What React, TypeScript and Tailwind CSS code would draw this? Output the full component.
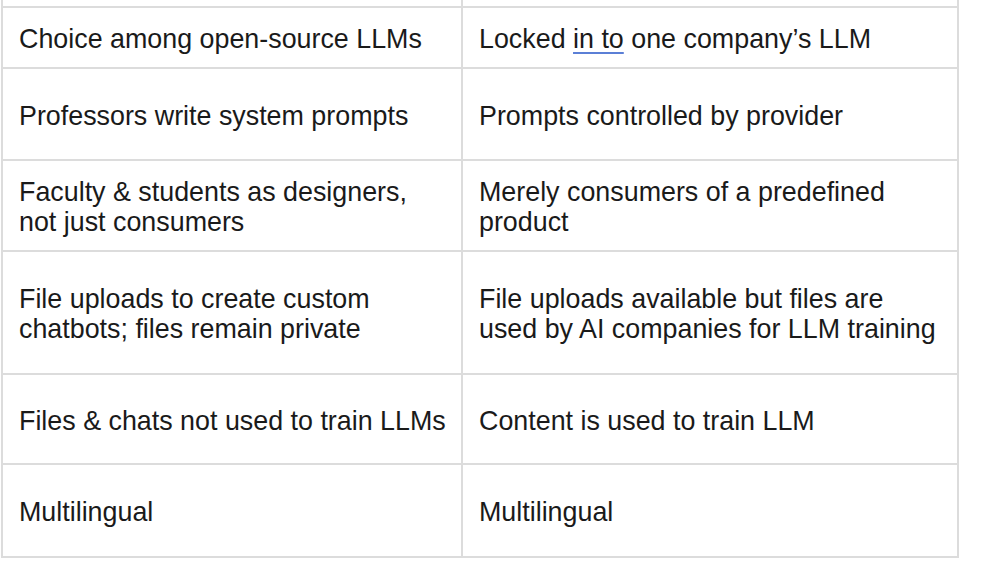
import React from "react";

type Row = { h: string; left: React.ReactNode; right: React.ReactNode };

const rows: Row[] = [
  {
    h: "h-[61px]",
    left: "Choice among open-source LLMs",
    right: (
      <>
        Locked{" "}
        <span className="underline decoration-[#5b7fd6] decoration-2 underline-offset-[4px]">in to</span>{" "}
        one company’s LLM
      </>
    ),
  },
  { h: "h-[92px]", left: "Professors write system prompts", right: "Prompts controlled by provider" },
  {
    h: "h-[91px]",
    left: (
      <>
        Faculty &amp; students as designers,
        <br />
        not just consumers
      </>
    ),
    right: (
      <>
        Merely consumers of a predefined
        <br />
        product
      </>
    ),
  },
  {
    h: "h-[123px]",
    left: (
      <>
        File uploads to create custom
        <br />
        chatbots; files remain private
      </>
    ),
    right: (
      <>
        File uploads available but files are
        <br />
        used by AI companies for LLM training
      </>
    ),
  },
  { h: "h-[90px]", left: "Files & chats not used to train LLMs", right: "Content is used to train LLM" },
  { h: "h-[93px]", left: "Multilingual", right: "Multilingual" },
];

export default function App() {
  return (
    <div className="w-[1006px] h-[568px] overflow-hidden bg-white font-['Liberation_Sans',Arial,sans-serif] text-[#1a1a1a] text-[26.85px] leading-[30px]">
      <div className="ml-[1px] w-[958px] border-l-2 border-r-2 border-b-2 border-[#dcdcdc]">
        <div className="grid grid-cols-[460px_494px] h-[6px]">
          <div className="border-r-2 border-[#dcdcdc]" />
          <div />
        </div>
        {rows.map((r, i) => (
          <div key={i} className={`grid grid-cols-[460px_494px] border-t-2 border-[#dcdcdc] ${r.h}`}>
            <div className="border-r-2 border-[#dcdcdc] flex items-center pl-4 pt-[3px] whitespace-nowrap">
              <div>{r.left}</div>
            </div>
            <div className="flex items-center pl-4 pt-[3px] whitespace-nowrap">
              <div>{r.right}</div>
            </div>
          </div>
        ))}
      </div>
    </div>
  );
}
